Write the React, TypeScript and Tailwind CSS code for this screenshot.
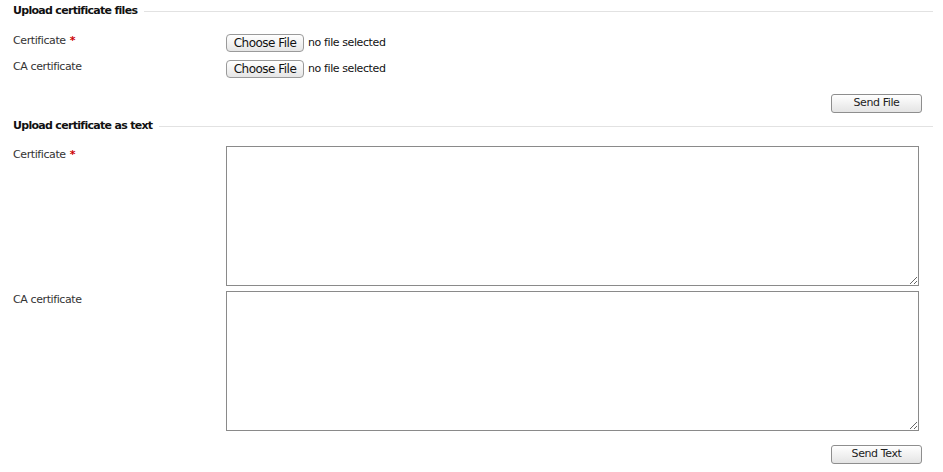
import React from "react";

const font = { fontFamily: '"DejaVu Sans", Verdana, sans-serif' };

function Header({ children }: { children: React.ReactNode }) {
  return (
    <div className="flex items-center h-[14px]">
      <span className="font-bold text-[11px] text-[#111] whitespace-nowrap tracking-[-0.7px]">{children}</span>
      <div className="flex-1 h-px bg-[#e2e2e2] ml-[7px]" />
    </div>
  );
}

function Label({ text, required }: { text: string; required?: boolean }) {
  return (
    <div className="w-[213px] shrink-0 text-[11px] leading-[13px] text-[#333] tracking-[-0.4px]">
      {text}
      {required && <span className="text-[#c00] font-bold ml-[4px]">*</span>}
    </div>
  );
}

function FileBtn() {
  return (
    <div className="flex items-center">
      <button className="h-[18px] w-[78px] rounded-[4px] border border-[#9a9a9a] bg-gradient-to-b from-white to-[#e6e6e6] text-[12px] text-[#111] leading-none" style={{ fontFamily: '"DejaVu Sans", sans-serif' }}>
        <span className="tracking-[-0.5px]">Choose File</span>
      </button>
      <span className="ml-[4px] text-[11px] text-[#111] tracking-[-0.4px]">no file selected</span>
    </div>
  );
}

function ActionBtn({ children }: { children: React.ReactNode }) {
  return (
    <button className="h-[19px] w-[91px] rounded-[3px] border border-[#8e8e8e] bg-gradient-to-b from-white to-[#e4e4e4] text-[11px] text-[#222] tracking-[-0.4px]">
      {children}
    </button>
  );
}

export default function App() {
  return (
    <div className="w-[943px] h-[472px] bg-white pl-[13px] pr-[10px] pt-[4px]" style={font}>
      <Header>Upload certificate files</Header>
      <div className="flex items-start mt-[16px] h-[18px]">
        <Label text="Certificate" required />
        <FileBtn />
      </div>
      <div className="flex items-start mt-[8px] h-[18px]">
        <Label text="CA certificate" />
        <FileBtn />
      </div>
      <div className="flex justify-end pr-[11px] mt-[16px]">
        <ActionBtn>Send File</ActionBtn>
      </div>
      <div className="mt-[6px]">
        <Header>Upload certificate as text</Header>
      </div>
      <div className="flex mt-[13px]">
        <div className="pt-[2px]">
          <Label text="Certificate" required />
        </div>
        <textarea className="w-[693px] h-[140px] border border-[#8a8a8a] resize-y block" />
      </div>
      <div className="flex mt-[5px]">
        <div className="pt-[2px]">
          <Label text="CA certificate" />
        </div>
        <textarea className="w-[693px] h-[140px] border border-[#8a8a8a] resize-y block" />
      </div>
      <div className="flex justify-end pr-[11px] mt-[14px]">
        <ActionBtn>Send Text</ActionBtn>
      </div>
    </div>
  );
}
